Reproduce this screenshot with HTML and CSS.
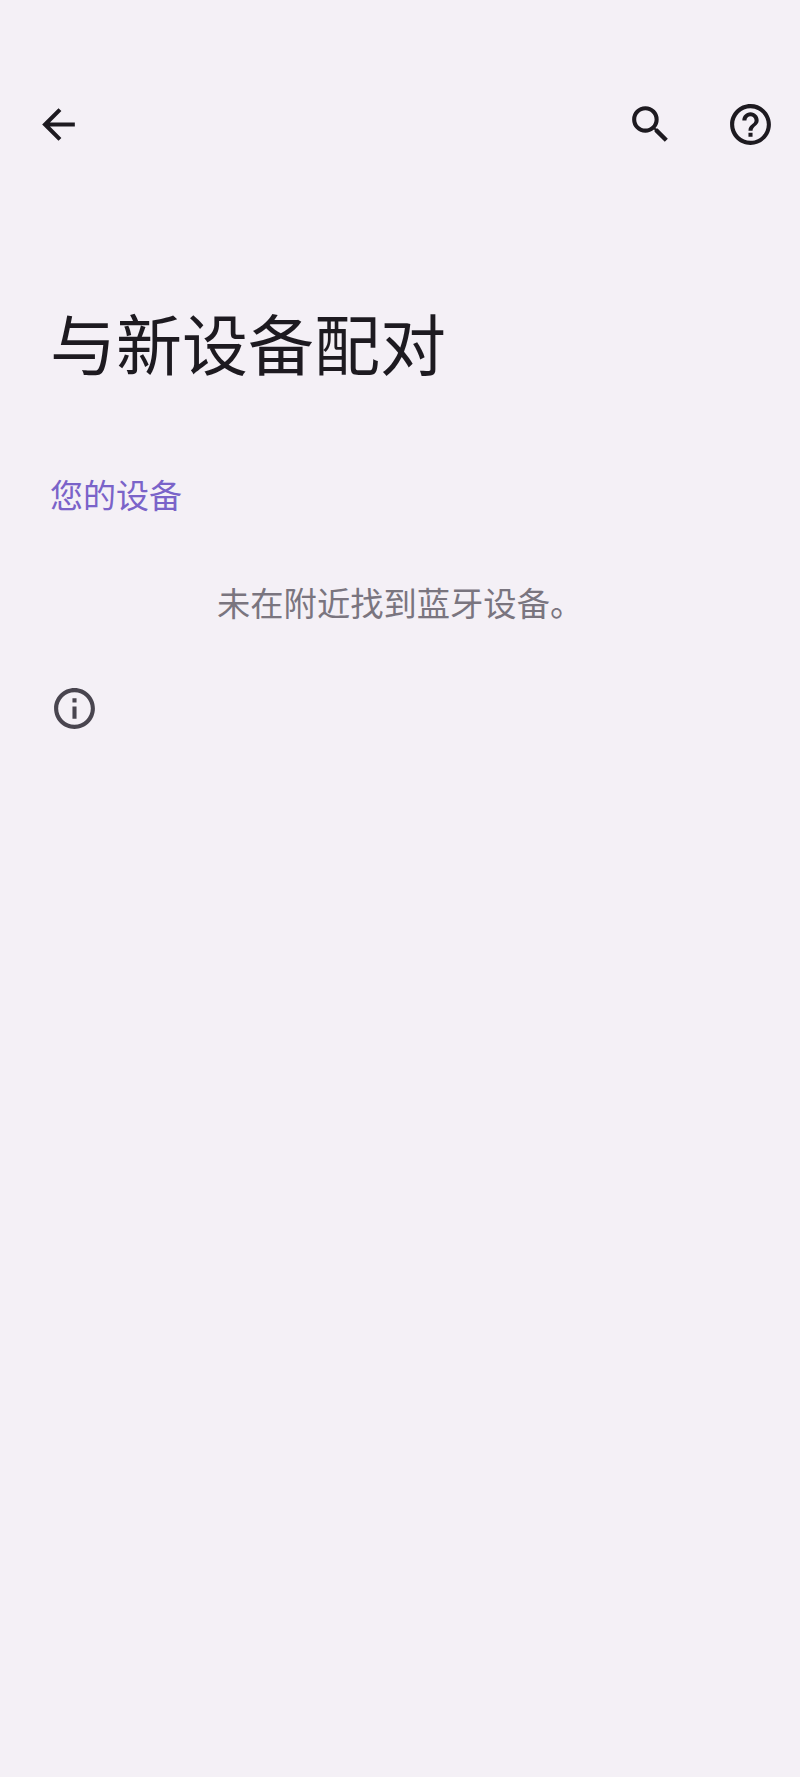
FILE: index.html
```html
<!DOCTYPE html>
<html lang="zh">
<head>
<meta charset="utf-8">
<title>与新设备配对</title>
<link rel="stylesheet" href="styles.css">
</head>
<body>
<div class="page">
  <header class="bar">
    <svg class="icon" viewBox="0 0 24 24"><path d="M20 11H7.83l5.59-5.59L12 4l-8 8 8 8 1.41-1.41L7.83 13H20v-2z"/></svg>
    <div class="actions">
      <svg class="icon" viewBox="0 0 24 24"><path d="M15.5 14h-.79l-.28-.27A6.47 6.47 0 0 0 16 9.5 6.5 6.5 0 1 0 9.5 16c1.61 0 3.09-.59 4.23-1.57l.27.28v.79l5 4.99L20.49 19l-4.99-5zm-6 0C7.01 14 5 11.99 5 9.5S7.01 5 9.5 5 14 7.01 14 9.5 11.99 14 9.5 14z"/></svg>
      <svg class="icon" viewBox="0 0 24 24"><path d="M11 18h2v-2h-2v2zm1-16C6.48 2 2 6.48 2 12s4.48 10 10 10 10-4.48 10-10S17.52 2 12 2zm0 18c-4.41 0-8-3.59-8-8s3.59-8 8-8 8 3.59 8 8-3.59 8-8 8zm0-14c-2.21 0-4 1.79-4 4h2c0-1.1.9-2 2-2s2 .9 2 2c0 2-3 1.75-3 5h2c0-2.25 3-2.5 3-5 0-2.21-1.79-4-4-4z"/></svg>
    </div>
  </header>
  <h1 class="title">与新设备配对</h1>
  <h2 class="section">您的设备</h2>
  <p class="empty">未在附近找到蓝牙设备。</p>
  <svg class="info" viewBox="0 0 24 24"><path d="M11 7h2v2h-2V7zm0 4h2v6h-2v-6zm1-9C6.48 2 2 6.48 2 12s4.48 10 10 10 10-4.48 10-10S17.52 2 12 2zm0 18c-4.41 0-8-3.59-8-8s3.59-8 8-8 8 3.59 8 8-3.59 8-8 8z"/></svg>
</div>
</body>
</html>
```
FILE: styles.css
```css
* { box-sizing: border-box; }
html, body { margin: 0; padding: 0; }
body {
  background: #f4f0f6;
  font-family: "Noto Sans CJK SC", "Liberation Sans", sans-serif;
}
.page {
  width: 800px;
  height: 1777px;
  overflow: hidden;
  padding-top: 100px;
}
.bar {
  display: flex;
  justify-content: space-between;
  align-items: center;
  height: 49px;
  padding: 0 25px 0 34px;
}
.actions {
  display: flex;
  gap: 51px;
}
.icon {
  display: block;
  width: 49px;
  height: 49px;
  fill: #1d1a20;
}
.title {
  margin: 156px 0 0;
  padding-left: 50px;
  font-size: 66px;
  line-height: 72px;
  font-weight: 400;
  color: #1d1a20;
}
.section {
  margin: 95px 0 0;
  padding-left: 50px;
  font-size: 33px;
  line-height: 44px;
  font-weight: 400;
  color: #7a63c9;
}
.empty {
  margin: 64px 0 0;
  padding-left: 217px;
  font-size: 33.3px;
  line-height: 44px;
  color: #7a757f;
}
.info {
  display: block;
  margin: 60px 0 0 50px;
  width: 49px;
  height: 49px;
  fill: #49454f;
}
```
